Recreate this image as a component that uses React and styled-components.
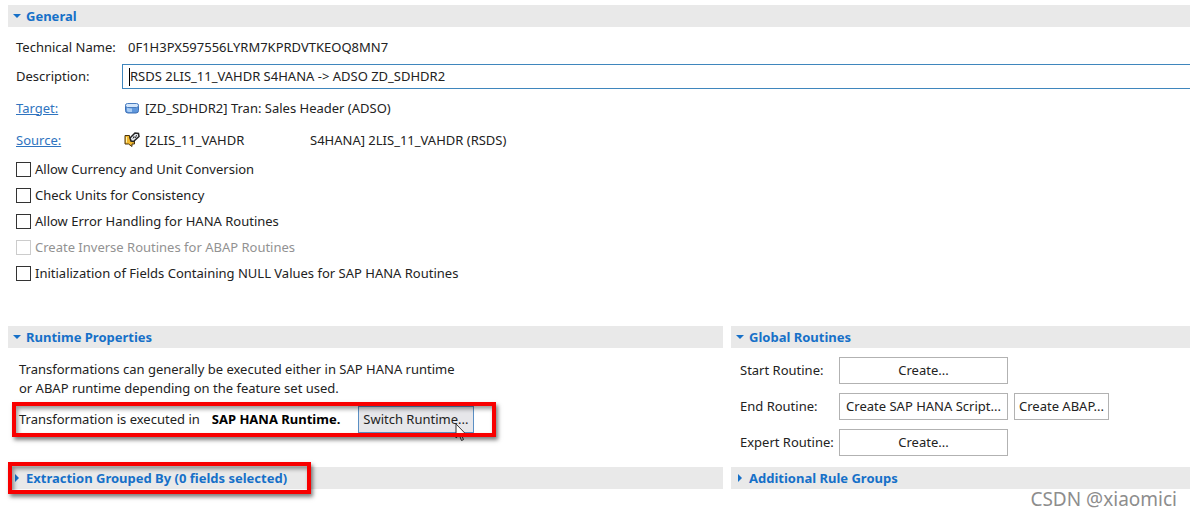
import { useState } from "react";
import styled, { createGlobalStyle } from "styled-components";

const options = [
  { id: "currency", label: "Allow Currency and Unit Conversion" },
  { id: "units", label: "Check Units for Consistency" },
  { id: "errors", label: "Allow Error Handling for HANA Routines" },
  { id: "inverse", label: "Create Inverse Routines for ABAP Routines", disabled: true },
  { id: "nulls", label: "Initialization of Fields Containing NULL Values for SAP HANA Routines" },
];

const routines = [
  { label: "Start Routine:", actions: ["Create..."] },
  { label: "End Routine:", actions: ["Create SAP HANA Script...", "Create ABAP..."] },
  { label: "Expert Routine:", actions: ["Create..."] },
];

function SectionHeader({ title, open, marked, onToggle }) {
  return (
    <Bar>
      <Toggle type="button" aria-expanded={open} onClick={onToggle}>
        <Arrow viewBox="0 0 8 8">
          <path d={open ? "M0 2h8L4 6z" : "M2 0v8l4-4z"} />
        </Arrow>
        {title}
      </Toggle>
      {marked && <HeaderMark />}
    </Bar>
  );
}

function AdsoIcon() {
  return (
    <Icon viewBox="0 0 16 16">
      <path d="M1.500 5v5.500q0 2.500 2.500 2.500h8q2.500 0 2.500-2.500V5z" fill="#5f97dc" stroke="#3d6fb5" />
      <path d="M3 7.500q2 1 5 1v3.500H5q-2 0-2-1.500z" fill="#a9cdf5" />
      <rect x="1.500" y="3.500" width="13" height="4" rx="2" fill="#d3e6fb" stroke="#4a7dc0" />
    </Icon>
  );
}

function DataSourceIcon() {
  return (
    <Icon viewBox="0 0 16 16">
      <path d="M1 3.500h4.500v2h3v3.500h2v3H8v2.500L4.500 12H1z" fill="#f2b92f" stroke="#4a3510" />
      <path d="M2.500 5v5.500" stroke="#fff0b0" />
      <path d="M6 6L11 1l3.500.5.500 3L9.500 9.500 7 9z" fill="#e9edf2" stroke="#222" strokeWidth="1.500" />
      <path d="M9 6.500l1-2 1.500 1.500 1-3" fill="none" stroke="#333" />
    </Icon>
  );
}

function App() {
  const [description, setDescription] = useState("RSDS 2LIS_11_VAHDR S4HANA -> ADSO ZD_SDHDR2");
  const [open, setOpen] = useState({
    general: true,
    runtime: true,
    routines: true,
    extraction: false,
    groups: false,
  });

  const toggle = (name) => setOpen({ ...open, [name]: !open[name] });

  return (
    <>
      <GlobalStyle />
      <Page>
        <section>
          <SectionHeader title="General" open={open.general} onToggle={() => toggle("general")} />
          {open.general && (
            <General>
              <Field>
                <span>Technical Name:</span>
                <TechnicalName>0F1H3PX597556LYRM7KPRDVTKEOQ8MN7</TechnicalName>
              </Field>
              <Field>
                <label htmlFor="description">Description:</label>
                <InputFrame>
                  <Caret />
                  <Input
                    id="description"
                    value={description}
                    onChange={(e) => setDescription(e.target.value)}
                  />
                </InputFrame>
              </Field>
              <Field $tall>
                <Link href="#target">Target:</Link>
                <ObjectName>
                  <AdsoIcon />
                  <span>[ZD_SDHDR2] Tran: Sales Header (ADSO)</span>
                </ObjectName>
              </Field>
              <Field $tall>
                <Link href="#source">Source:</Link>
                <ObjectName>
                  <DataSourceIcon />
                  <SourceId>[2LIS_11_VAHDR</SourceId>
                  <span>S4HANA] 2LIS_11_VAHDR (RSDS)</span>
                </ObjectName>
              </Field>
              <Options>
                {options.map((option) => (
                  <Option key={option.id} $disabled={option.disabled}>
                    <Checkbox type="checkbox" disabled={option.disabled} />
                    {option.label}
                  </Option>
                ))}
              </Options>
            </General>
          )}
        </section>

        <Columns>
          <section>
            <SectionHeader title="Runtime Properties" open={open.runtime} onToggle={() => toggle("runtime")} />
            <Body>
              {open.runtime && (
                <>
                  <Text>
                    Transformations can generally be executed either in SAP HANA runtime
                    <br />
                    or ABAP runtime depending on the feature set used.
                  </Text>
                  <RuntimeRow>
                    <span>Transformation is executed in</span>
                    <strong>SAP HANA Runtime.</strong>
                    <SwitchButton type="button">
                      Switch Runtime...
                      <Pointer viewBox="0 0 12 19">
                        <path d="M1 1v14l3.300-3 2.200 5.500 2-.9L6.300 11.300H11z" fill="#fff" stroke="#333" />
                      </Pointer>
                    </SwitchButton>
                    <RowMark />
                  </RuntimeRow>
                </>
              )}
            </Body>
            <SectionHeader
              title="Extraction Grouped By (0 fields selected)"
              open={open.extraction}
              onToggle={() => toggle("extraction")}
              marked
            />
          </section>

          <section>
            <SectionHeader title="Global Routines" open={open.routines} onToggle={() => toggle("routines")} />
            <Body>
              {open.routines && (
                <Routines>
                  {routines.map((routine) => (
                    <Routine key={routine.label}>
                      <span>{routine.label}</span>
                      {routine.actions.map((action) => (
                        <Button key={action} type="button">
                          {action}
                        </Button>
                      ))}
                    </Routine>
                  ))}
                </Routines>
              )}
            </Body>
            <SectionHeader title="Additional Rule Groups" open={open.groups} onToggle={() => toggle("groups")} />
          </section>
        </Columns>
        <Watermark>CSDN @xiaomici</Watermark>
      </Page>
    </>
  );
}

export default App;

const GlobalStyle = createGlobalStyle`
* {
  box-sizing: border-box;
}

body {
  margin: 0;
  background: #fff;
  color: #222;
  font-family: "Noto Sans", "Open Sans", sans-serif;
  font-size: 13px;
  line-height: 19px;
}

button, input {
  font: inherit;
  color: inherit;
}
`;

const Page = styled.main`
  position: relative;
  padding: 5px 0 28px 8px;
`;

const Bar = styled.h2`
  position: relative;
  margin: 0;
  height: 22px;
  background: #e9e9e9;
  font-size: 13px;
`;

const Toggle = styled.button`
  display: flex;
  align-items: center;
  gap: 5px;
  height: 22px;
  padding: 0 5px;
  border: none;
  background: none;
  color: #1670c8;
  font-weight: bold;
  white-space: nowrap;
  cursor: pointer;
`;

const Arrow = styled.svg`
  width: 8px;
  height: 8px;
  fill: #1670c8;
`;

const General = styled.div`
  padding: 6px 0 0 8px;
`;

const Field = styled.div`
  display: grid;
  grid-template-columns: 106px minmax(0, 1fr);
  align-items: center;
  min-height: ${(props) => (props.$tall ? "32px" : "29px")};
  padding-top: ${(props) => (props.$tall ? "2px" : "0")};
`;

const TechnicalName = styled.span`
  padding-left: 6px;
`;

const InputFrame = styled.div`
  display: flex;
  align-items: center;
  height: 25px;
  padding-left: 6px;
  border: 1px solid #3f86bd;
  border-right: none;
`;

const Caret = styled.span`
  width: 1px;
  height: 18px;
  background: #000;
`;

const Input = styled.input`
  flex: 1;
  min-width: 0;
  padding: 0;
  border: none;
  outline: none;
  background: none;
`;

const Link = styled.a`
  color: #2f74c0;
`;

const ObjectName = styled.div`
  display: flex;
  align-items: center;
  gap: 5px;
  padding-left: 2px;
  white-space: nowrap;
`;

const Icon = styled.svg`
  width: 16px;
  height: 16px;
`;

const SourceId = styled.span`
  width: 160px;
`;

const Options = styled.div`
  display: flex;
  flex-direction: column;
  align-items: flex-start;
  padding-top: 1px;
`;

const Option = styled.label`
  display: flex;
  align-items: center;
  gap: 4px;
  height: 26px;
  color: ${(props) => (props.$disabled ? "#929292" : "inherit")};
`;

const Checkbox = styled.input`
  appearance: none;
  width: 15px;
  height: 15px;
  margin: 0;
  border: 1px solid #333;
  background: #fff;

  &:checked {
    background: #1670c8;
  }

  &:disabled {
    border-color: #ccc;
  }
`;

const Columns = styled.div`
  display: grid;
  grid-template-columns: minmax(0, 715fr) minmax(0, 459fr);
  gap: 8px;
  margin-top: 40px;
`;

const Body = styled.div`
  min-height: 119px;
`;

const Text = styled.p`
  margin: 0;
  padding: 12px 0 0 11px;
`;

const RuntimeRow = styled.div`
  position: relative;
  display: flex;
  align-items: center;
  gap: 12px;
  width: fit-content;
  margin: 8px 0 0 11px;
  white-space: nowrap;

  strong {
    color: #000;
  }
`;

const Button = styled.button`
  height: 27px;
  padding: 0 4px;
  border: 1px solid #b2b2b2;
  background: #fff;
  white-space: nowrap;
`;

const SwitchButton = styled(Button)`
  position: relative;
  margin-left: 6px;
  border-color: #5a8fc4;
  background: #e6e6ea;
`;

const Pointer = styled.svg`
  position: absolute;
  right: 6px;
  bottom: -10px;
  width: 12px;
  height: 19px;
`;

const Mark = styled.span`
  position: absolute;
  border: 4px solid #f80000;
  box-shadow: 2px 3px 4px rgba(0, 0, 0, 0.5), inset 2px 3px 4px rgba(0, 0, 0, 0.4);
  pointer-events: none;
`;

const RowMark = styled(Mark)`
  top: -4px;
  bottom: -4px;
  left: -7px;
  right: -22px;
`;

const HeaderMark = styled(Mark)`
  top: -5px;
  left: 0;
  width: 303px;
  height: 32px;
`;

const Routines = styled.div`
  display: flex;
  flex-direction: column;
  gap: 9px;
  padding: 9px 0 0 9px;
`;

const Routine = styled.div`
  display: grid;
  grid-template-columns: 93px 169px max-content;
  align-items: center;
  column-gap: 6px;
  white-space: nowrap;
`;

const Watermark = styled.span`
  position: absolute;
  right: 13px;
  bottom: 4px;
  color: #8d8d8d;
  font-size: 19px;
  line-height: 28px;
`;
